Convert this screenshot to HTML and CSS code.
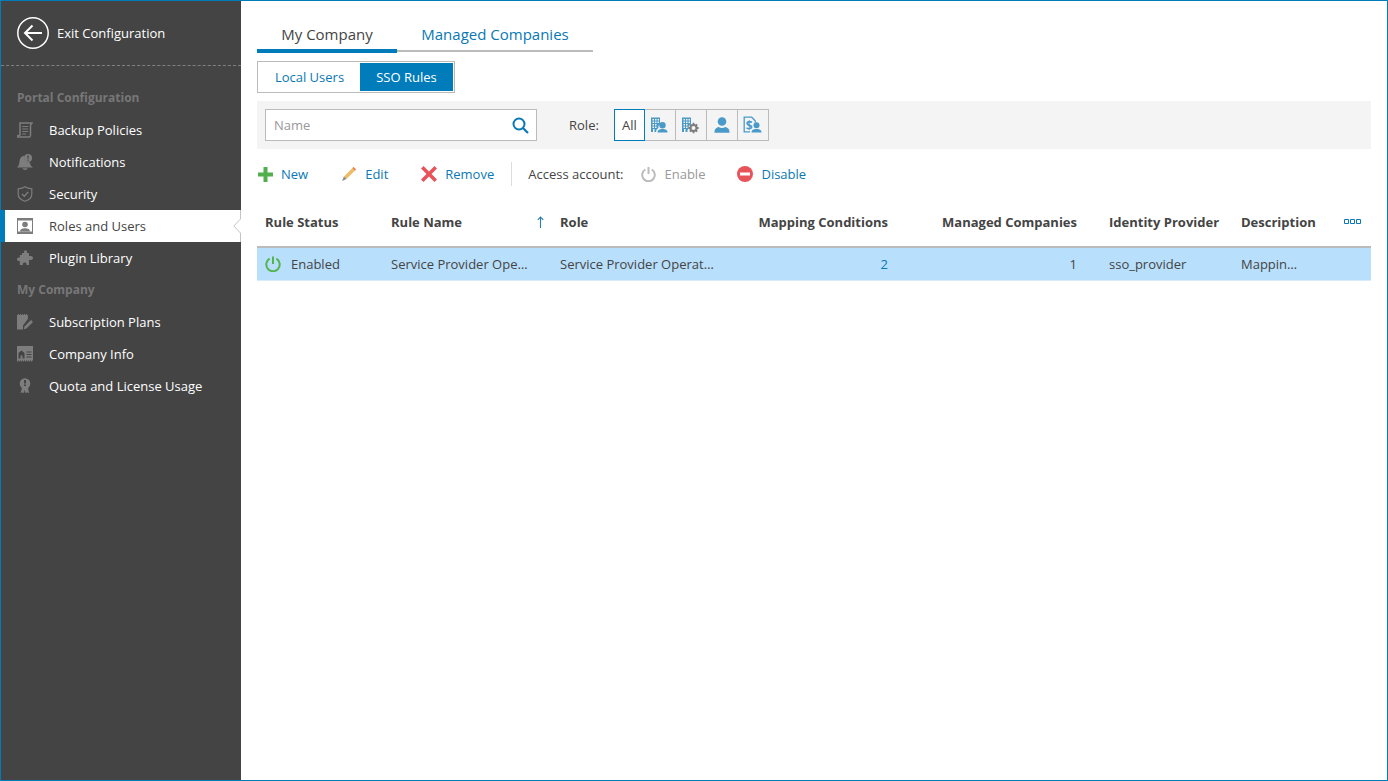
FILE: index.html
```html
<!DOCTYPE html>
<html lang="en">
<head>
<meta charset="utf-8">
<title>Roles and Users</title>
<link rel="stylesheet" href="styles.css">
</head>
<body>
<div class="app">
  <aside class="sidebar">
    <a class="exit">
      <svg class="exit-icon" width="32" height="32" viewBox="0 0 32 32"><circle cx="16" cy="16" r="15.2" fill="none" stroke="#fff" stroke-width="1.500"/><path d="M25 16H8.500M15.500 8.500L8 16l7.500 7.500" fill="none" stroke="#fff" stroke-width="2"/></svg>
      <span>Exit Configuration</span>
    </a>
    <nav class="nav">
      <div class="nav-head">Portal Configuration</div>
      <a class="nav-item"><svg class="nav-icon" viewBox="0 0 16 16"><path d="M3 1h12l-1.500 2.200V13.500c0 .9-.6 1.500-1.500 1.500H0.500c0-1.200.7-1.800 1.500-1.800L3 13z" fill="none" stroke="#7d7d7d" stroke-width="1.500"/><path d="M5.200 4.500h6M5.200 7h6M5.200 9.500h6M5.200 12h4" stroke="#7d7d7d" stroke-width="1"/></svg><span>Backup Policies</span></a>
      <a class="nav-item"><svg class="nav-icon" viewBox="0 0 16 16"><path d="M0 13.500c1.500-1.200 2.200-2.700 2.400-5.500C2.600 4.500 4 2.400 7 1.500c-.6 3.200 1 6.700 6 7 .2 2.400 1 3.900 3 5z" fill="#7d7d7d"/><circle cx="11" cy="4" r="4" fill="#7d7d7d"/><path d="M11 1.500v3M11 5.500v1.200" stroke="#444" stroke-width="1.300"/><path d="M5.500 14.300h5c0 1-1.200 1.700-2.500 1.700s-2.500-.7-2.500-1.700z" fill="#7d7d7d"/></svg><span>Notifications</span></a>
      <a class="nav-item"><svg class="nav-icon" viewBox="0 0 16 16"><path d="M8 .8c2 1.400 4 1.800 6.800 2v5.500c0 3.200-3 5.800-6.800 7-3.800-1.200-6.800-3.800-6.800-7V2.800C4 2.600 6 2.200 8 .8z" fill="none" stroke="#7d7d7d" stroke-width="1.200"/><path d="M5 8l2.300 2.300L11.200 6" fill="none" stroke="#7d7d7d" stroke-width="1.300"/></svg><span>Security</span></a>
      <a class="nav-item is-active"><svg class="nav-icon" viewBox="0 0 16 16"><rect x=".5" y=".5" width="15" height="15" fill="#fff" stroke="#7d7d7d"/><rect x="1" y="1" width="14" height="1.500" fill="#7d7d7d"/><rect x="1" y="13.500" width="14" height="1.500" fill="#7d7d7d"/><circle cx="8" cy="6.500" r="2.800" fill="#7d7d7d"/><path d="M3 13.500c0-2.500 2-3.300 5-3.300s5 .8 5 3.300z" fill="#7d7d7d"/></svg><span>Roles and Users</span><svg class="notch" width="9" height="32" viewBox="0 0 9 32"><path d="M7.500 0V9L.8 16l6.700 7v9" fill="none" stroke="#c4c4c4"/></svg></a>
      <a class="nav-item"><svg class="nav-icon" viewBox="0 0 16 16"><path d="M5 3h2.200C6.500 1.500 7.300.2 8.500.2s2 1.300 1.300 2.800H12v3.200c1.500-.7 4-.3 4 1.700s-2.500 2.400-4 1.800V15H9.300c.7-1.500-.2-2.500-1.600-2.500S5.500 13.500 6 15H2.800v-4.200c-1.300.8-2.800 0-2.800-1.500S1.500 7 2.800 7.800V5H5z" fill="#7d7d7d"/></svg><span>Plugin Library</span></a>
      <div class="nav-head">My Company</div>
      <a class="nav-item"><svg class="nav-icon" viewBox="0 0 16 16"><path d="M0 1h.9v-1h1v1h1v-1h1v1h1v-1h1v1h1v-1h1v1h1v-1h1v1h1v4L6 11.500v4H0z" fill="#7d7d7d"/><path d="M7.500 12.500l6.500-6.500 2 2-6.500 6.500-2.700.7z" fill="#7d7d7d"/></svg><span>Subscription Plans</span></a>
      <a class="nav-item"><svg class="nav-icon" viewBox="0 0 16 16"><path d="M0 0h16v14.500h-1v1h-1v-1h-1v1h-1v-1h-1v1h-1v-1H9v1H8v-1H7v1H6v-1H5v1H4v-1H3v1H2v-1H1v1H0z" fill="#7d7d7d"/><path d="M1.500 12.500V7l3-2.500 3 2.500v5.500H5.500V9.500h-2v3z" fill="#444"/><path d="M9.500 6h5M9.500 8.500h5M9.500 11h5" stroke="#444" stroke-width="1"/></svg><span>Company Info</span></a>
      <a class="nav-item"><svg class="nav-icon" viewBox="0 0 16 16"><circle cx="8" cy="5.500" r="5.300" fill="#7d7d7d"/><path d="M7 2h2v3.500H7zM7 6.500h2v1.500H7z" fill="#444"/><path d="M5 10l-1.500 5.200 2-1 1.500 1 .8-3.500.8 3.500 1.500-1 2 1L11 10z" fill="#7d7d7d"/></svg><span>Quota and License Usage</span></a>
    </nav>
  </aside>
  <main class="main">
    <div class="tabs">
      <a class="tab tab-company is-current">My Company</a>
      <a class="tab tab-managed">Managed Companies</a>
    </div>
    <div class="toggle">
      <a class="toggle-item toggle-local">Local Users</a>
      <a class="toggle-item toggle-sso is-on">SSO Rules</a>
    </div>
    <div class="filter">
      <label class="search">
        <span class="placeholder">Name</span>
        <svg width="17" height="17" viewBox="0 0 17 17"><circle cx="7" cy="7" r="5.500" fill="none" stroke="#0a78b4" stroke-width="2"/><path d="M11 11l5 5" stroke="#0a78b4" stroke-width="2.200"/></svg>
      </label>
      <span class="role-label">Role:</span>
      <div class="roles">
        <a class="role is-selected">All</a>
        <a class="role"><svg width="18" height="18" viewBox="1 0 18 18"><path d="M1 1.500h9v7C8.500 9 8 10.500 8.500 12c-1.500.7-2.300 2-2.500 4H4.500v-3H3v3H1z" fill="#4a9ac9"/><path d="M2.500 3h1.500v1.500H2.500zM5 3h1.500v1.500H5zM7.500 3H9v1.500H7.500zM2.500 5.500h1.500V7H2.500zM5 5.500h1.500V7H5zM7.500 5.500H9V7H7.500zM2.500 8h1.500v1.500H2.500zM5 8h1.500v1.500H5zM2.500 10.500h1.500V12H2.500zM5 10.500h1.500V12H5z" fill="#f4f4f4"/><circle cx="12.500" cy="9.300" r="3.200" fill="#4a9ac9"/><path d="M7.500 16.500c0-2.800 2-3.600 5-3.600s5 .8 5 3.600z" fill="#4a9ac9"/></svg></a>
        <a class="role"><svg width="18" height="18" viewBox="0 0 18 18"><path d="M0 1.500h9v6C7.500 8.500 6 10.500 6.500 13l-1 1v2H3.500v-3H2v3H0z" fill="#4a9ac9"/><path d="M1.500 3h1.500v1.500H1.500zM4 3h1.500v1.500H4zM6.500 3H8v1.500H6.500zM1.500 5.500h1.500V7H1.500zM4 5.500h1.500V7H4zM6.500 5.500H8V7H6.500zM1.500 8h1.500v1.500H1.500zM4 8h1.500v1.500H4zM1.500 10.500h1.500V12H1.500zM4 10.500h1.500V12H4z" fill="#f4f4f4"/><path d="M11.500 6.800v10.400M6.300 12h10.400M7.800 8.300l7.400 7.400M15.200 8.300l-7.400 7.400" stroke="#7d7d7d" stroke-width="1.800"/><circle cx="11.500" cy="12" r="3" fill="#f4f4f4" stroke="#7d7d7d" stroke-width="2"/></svg></a>
        <a class="role"><svg width="16" height="16" viewBox="0 0 16 16"><circle cx="8" cy="4.500" r="4.300" fill="#4a9ac9"/><path d="M.5 15.800c0-3.700 1.500-5 4.200-5.700 1.800 1.200 4.800 1.200 6.600 0 2.700.7 4.200 2 4.200 5.700z" fill="#4a9ac9"/></svg></a>
        <a class="role"><svg width="20" height="18" viewBox="0 0 20 18"><path d="M7 15.800H1.200V1.200h7.500l3.500 3.500v1.800" fill="none" stroke="#4a9ac9" stroke-width="1.300"/><text class="dollar" x="2.800" y="13.500">$</text><circle cx="13.500" cy="9.300" r="3" fill="#4a9ac9"/><path d="M8.500 16.500c0-2.800 2-3.600 5-3.600s5 .8 5 3.600z" fill="#4a9ac9"/></svg></a>
      </div>
    </div>
    <div class="toolbar">
      <a class="action act-new"><svg width="15" height="15" viewBox="0 0 15 15"><path d="M5.500 0h4v5.500H15v4H9.500V15h-4V9.500H0v-4h5.500z" fill="#52b04c"/></svg><span>New</span></a>
      <a class="action act-edit"><svg width="16" height="16" viewBox="0 0 16 16"><path d="M3 10.500L12.500 1l2.500 2.500L5.500 13z" fill="#eebb66"/><path d="M12.500 1L15 3.500l-1 1L11.500 2z" fill="#e87c50"/><path d="M3 10.500L5.500 13 1 15z" fill="#8a8a8a"/></svg><span>Edit</span></a>
      <a class="action act-remove"><svg width="16" height="16" viewBox="0 0 16 16"><path d="M2.500 0L8 5.500 13.500 0 16 2.500 10.500 8 16 13.500 13.500 16 8 10.500 2.500 16 0 13.500 5.500 8 0 2.500z" fill="#e8535a"/></svg><span>Remove</span></a>
      <span class="sep"></span>
      <span class="access">Access account:</span>
      <a class="action act-enable is-disabled"><svg width="15" height="15" viewBox="0 0 15 15"><path d="M4.300 2.500a6.300 6.300 0 1 0 6.400 0" fill="none" stroke="#bbb" stroke-width="2"/><path d="M7.500 0v7" stroke="#bbb" stroke-width="2"/></svg><span>Enable</span></a>
      <a class="action act-disable"><svg width="16" height="16" viewBox="0 0 16 16"><circle cx="8" cy="8" r="8" fill="#e8535a"/><rect x="3" y="6.500" width="10" height="3" fill="#fff"/></svg><span>Disable</span></a>
    </div>
    <table class="grid">
      <colgroup>
        <col class="c-status"><col class="c-name"><col class="c-role"><col class="c-map"><col class="c-managed"><col class="c-idp"><col class="c-desc"><col class="c-more">
      </colgroup>
      <thead>
        <tr>
          <th>Rule Status</th>
          <th class="sorted">Rule Name<svg class="sort" width="7" height="12" viewBox="0 0 7 12"><path d="M3.500 1v11M.8 3.800L3.500 1l2.700 2.800" fill="none" stroke="#2a7fae" stroke-width="1.100"/></svg></th>
          <th>Role</th>
          <th class="num">Mapping Conditions</th>
          <th class="num">Managed Companies</th>
          <th class="idp">Identity Provider</th>
          <th>Description</th>
          <th class="more"><svg width="17" height="6" viewBox="0 0 17 6"><path d="M.5.500h4v4h-4zM6.500.500h4v4h-4zM12.500.500h4v4h-4z" fill="none" stroke="#0a78b4"/></svg></th>
        </tr>
      </thead>
      <tbody>
        <tr>
          <td><span class="status"><svg width="16" height="16" viewBox="0 0 16 16"><path d="M4.600 2.700a6.700 6.700 0 1 0 6.800 0" fill="none" stroke="#55b44f" stroke-width="2"/><path d="M8 .5v7.500" stroke="#55b44f" stroke-width="2"/></svg>Enabled</span></td>
          <td class="trunc-name">Service Provider Operator</td>
          <td class="trunc-role">Service Provider Operator</td>
          <td class="num"><a class="link">2</a></td>
          <td class="num">1</td>
          <td class="idp">sso_provider</td>
          <td class="trunc-desc">Mapping rule</td>
          <td></td>
        </tr>
      </tbody>
    </table>
  </main>
</div>
</body>
</html>
```
FILE: styles.css
```css
* { box-sizing: border-box; }
html, body { margin: 0; height: 100%; }
body { font-family: "Open Sans", "Liberation Sans", sans-serif; font-size: 13px; color: #444; background: #fff; }
svg { display: block; flex: none; }
.app { display: flex; width: 1388px; height: 781px; border: 1px solid #007cba; overflow: hidden; }

.sidebar { width: 240px; flex: none; background: #444; color: #fff; }
.exit { display: flex; align-items: center; gap: 8px; height: 65px; padding-left: 16px; border-bottom: 1px dashed #808080; }
.nav { padding-top: 16px; }
.nav-head { height: 32px; line-height: 32px; padding-left: 16px; font-size: 12px; font-weight: 700; color: #777; }
.nav-item { position: relative; display: flex; align-items: center; height: 32px; padding-left: 16px; gap: 16px; }
.nav-icon { width: 16px; height: 16px; }
.is-active { margin-left: 4px; padding-left: 12px; background: #fff; color: #444; }
.is-active::before { content: ""; position: absolute; left: -4px; top: 0; width: 4px; height: 32px; background: #007cba; }
.notch { position: absolute; right: -0.5px; top: 0; }

.main { flex: 1; min-width: 0; padding: 0 16px; }
.tabs { display: flex; height: 52px; }
.tab { display: flex; align-items: center; justify-content: center; height: 51px; padding-top: 16px; font-size: 15px; color: #0a78b4; border-bottom: 2px solid #bbb; }
.tab-company { width: 140px; height: 52px; padding-top: 17px; color: #444; border-bottom: 4px solid #007cba; }
.tab-managed { width: 196px; }
.toggle { display: flex; width: 198px; height: 32px; margin-top: 8px; padding: 1px; border: 1px solid #bbb; }
.toggle-item { display: flex; align-items: center; justify-content: center; height: 28px; color: #0a78b4; }
.toggle-local { width: 101px; }
.toggle-sso { width: 93px; }
.is-on { background: #007cba; color: #fff; }

.filter { display: flex; align-items: center; height: 48px; margin-top: 8px; padding-left: 8px; background: #f4f4f4; }
.search { display: flex; align-items: center; justify-content: space-between; width: 272px; height: 32px; padding: 0 7px 0 8px; background: #fff; border: 1px solid #bbb; }
.placeholder { color: #999; }
.role-label { margin-left: 32px; margin-right: 15px; }
.roles { display: flex; }
.role { display: flex; align-items: center; justify-content: center; width: 32px; height: 32px; margin-left: -1px; border: 1px solid #bbb; }
.role:first-child { width: 31px; margin-left: 0; }
.is-selected { position: relative; background: #fff; border-color: #007cba; }
.dollar { font-size: 12px; font-weight: 700; fill: #4a9ac9; }

.toolbar { display: flex; align-items: center; height: 50px; }
.action { display: flex; align-items: center; gap: 8px; color: #0a78b4; }
.act-new { margin-left: 1px; }
.act-edit { margin-left: 33px; }
.act-remove { margin-left: 33px; }
.sep { width: 1px; height: 24px; margin-left: 17px; background: #ddd; }
.access { margin-left: 16px; }
.act-enable { margin-left: 18px; }
.act-disable { margin-left: 32px; }
.is-disabled { color: #999; }

.grid { width: 1114px; table-layout: fixed; border-collapse: separate; border-spacing: 0; }
.c-status { width: 126px; }
.c-name { width: 169px; }
.c-role { width: 185px; }
.c-map { width: 159px; }
.c-managed { width: 189px; }
.c-idp { width: 148px; }
.c-desc { width: 105px; }
.c-more { width: 33px; }
th { height: 49px; padding: 0 8px 1px; text-align: left; font-weight: 700; white-space: nowrap; border-bottom: 2px solid #bbb; }
td { height: 33px; padding: 0 8px; white-space: nowrap; overflow: hidden; text-overflow: ellipsis; background: #b8dffc; border-bottom: 1px solid #d9ecfb; }
.num { text-align: right; }
.idp { padding-left: 24px; }
.sorted { position: relative; }
.sort { position: absolute; right: 8px; top: 17px; }
.more { padding: 0 0 1px 6px; }
.status { display: flex; align-items: center; gap: 10px; }
.link { color: #0a78b4; }
.trunc-name { padding-right: 22px; }
.trunc-role { padding-right: 21px; }
.trunc-desc { padding-right: 39px; }
```
